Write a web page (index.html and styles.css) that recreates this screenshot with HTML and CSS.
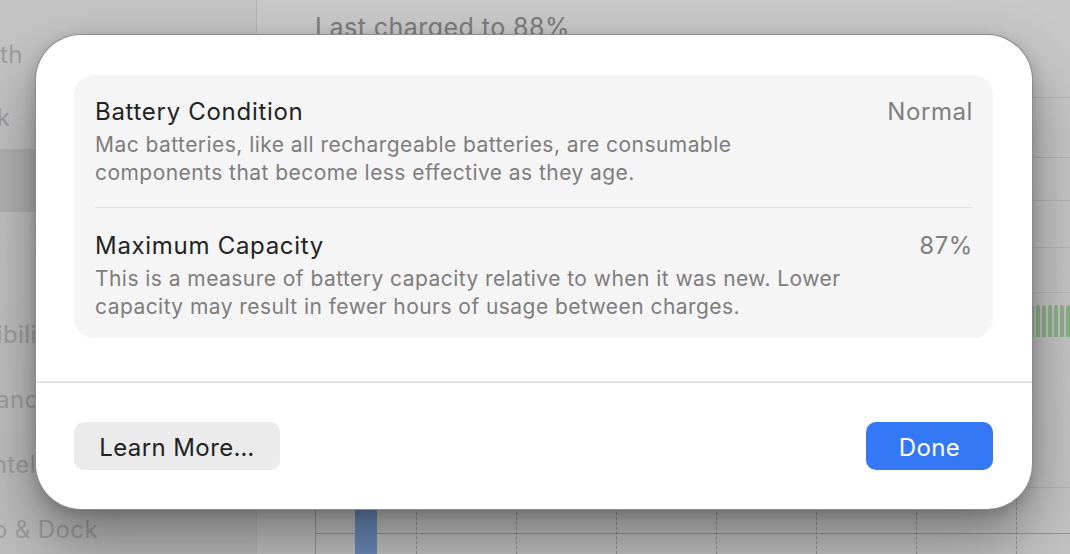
FILE: index.html
```html
<!DOCTYPE html>
<html lang="en">
<head>
<meta charset="utf-8">
<title>Battery Health</title>
<link rel="stylesheet" href="styles.css">
</head>
<body>
<div class="app">
  <aside class="sidebar">
    <div class="side-item"><span>Bluetooth</span></div>
    <div class="side-item"><span>Network</span></div>
    <div class="side-item selected"><span>Battery</span></div>
    <div class="side-gap"></div>
    <div class="side-item wide"><span>Accessibility</span></div>
    <div class="side-item wide"><span>Appearance</span></div>
    <div class="side-item wide"><span>Apple Intelligence &amp; Siri</span></div>
    <div class="side-item wide"><span>Desktop &amp; Dock</span></div>
  </aside>
  <main class="content">
    <div class="heading">Last charged to 88%</div>
    <div class="chart-top">
      <div class="grid-row h60"></div>
      <div class="grid-row h43"></div>
      <div class="grid-row h47"></div>
      <div class="grid-row h45"></div>
      <div class="grid-row h13"></div>
    </div>
    <div class="battery-bars">
      <i></i><i></i><i></i><i></i><i></i><i></i><i></i><i></i><i></i><i></i><i></i><i></i><i></i><i></i><i></i><i></i>
    </div>
    <div class="chart-bottom">
      <div class="col first"><div class="usage-bar"></div></div>
      <div class="col"></div>
      <div class="col"></div>
      <div class="col"></div>
      <div class="col"></div>
      <div class="col"></div>
      <div class="col"></div>
      <div class="col"></div>
    </div>
  </main>
</div>

<div class="sheet">
  <div class="sheet-body">
    <div class="card">
      <div class="info-row">
        <div class="info-text">
          <div class="info-title">Battery Condition</div>
          <div class="info-desc">Mac batteries, like all rechargeable batteries, are consumable components that become less effective as they age.</div>
        </div>
        <div class="info-value">Normal</div>
      </div>
      <div class="info-row">
        <div class="info-text">
          <div class="info-title">Maximum Capacity</div>
          <div class="info-desc">This is a measure of battery capacity relative to when it was new. Lower capacity may result in fewer hours of usage between charges.</div>
        </div>
        <div class="info-value">87%</div>
      </div>
    </div>
  </div>
  <div class="sheet-footer">
    <button class="btn btn-secondary">Learn More…</button>
    <button class="btn btn-primary">Done</button>
  </div>
</div>
</body>
</html>
```
FILE: styles.css
```css
* { box-sizing: border-box; }

html, body {
  margin: 0;
  padding: 0;
}

body {
  width: 1070px;
  height: 554px;
  overflow: hidden;
  position: relative;
  background: #c6c6c6;
  font-family: "Inter", "Noto Sans", "DejaVu Sans", sans-serif;
}

/* ---------- dimmed background window ---------- */
.app {
  display: flex;
  height: 554px;
}

.sidebar {
  width: 257px;
  flex: none;
  display: flex;
  flex-direction: column;
  padding-top: 23px;
  background: linear-gradient(180deg, #c4c4c4 0%, #bcbcbc 100%);
  border-right: 1px solid #b6b6b6;
  overflow: hidden;
}

.side-item {
  height: 63px;
  flex: none;
  display: flex;
  align-items: center;
  font-size: 24px;
  letter-spacing: 0.4px;
  color: #9d9d9d;
  white-space: nowrap;
}

.side-item span {
  margin-left: -89px;
}

.side-item.selected {
  background: #b2b2b2;
}

.side-item.wide {
  height: 65px;
}

.side-gap {
  height: 90px;
  flex: none;
}

.content {
  flex: 1;
  display: flex;
  flex-direction: column;
  padding-left: 58px;
  background: linear-gradient(180deg, #c8c8c8 0%, #c3c3c3 100%);
  overflow: hidden;
}

.heading {
  height: 97px;
  padding-top: 12px;
  font-size: 25px;
  line-height: 30px;
  letter-spacing: 0.45px;
  color: #7b7b7b;
  white-space: nowrap;
}

.chart-top {
  display: flex;
  flex-direction: column;
}

.grid-row {
  border-top: 1px solid #b5b5b5;
}
.h60 { height: 60px; }
.h43 { height: 43px; }
.h47 { height: 47px; }
.h45 { height: 45px; }
.h13 { height: 13px; }

.battery-bars {
  height: 32px;
  display: flex;
  justify-content: flex-end;
  gap: 2px;
}

.battery-bars i {
  width: 4px;
  background: #8cb388;
  border-radius: 2px 2px 0 0;
}

.chart-bottom {
  margin-top: 150px;
  flex: 1;
  display: flex;
  border-top: 1px solid #b3b3b3;
  border-left: 1px solid #959595;
  background: linear-gradient(#979797, #979797) 0 45px / 100% 1px no-repeat;
}

.col {
  width: 100px;
  flex: none;
  border-right: 1px dashed #949494;
  position: relative;
}

.col.first {
  width: 101px;
}

.usage-bar {
  position: absolute;
  left: 39px;
  top: 10px;
  bottom: 0;
  width: 22px;
  background: #6c8bbc;
}

/* ---------- sheet ---------- */
.sheet {
  position: absolute;
  left: 35px;
  top: 34px;
  width: 998px;
  height: 476px;
  display: flex;
  flex-direction: column;
  background: #ffffff;
  border: 1px solid rgba(0, 0, 0, 0.45);
  border-radius: 46px;
  box-shadow: 0 30px 60px rgba(0, 0, 0, 0.38), 0 4px 14px rgba(0, 0, 0, 0.16);
}

.sheet-body {
  padding: 40px 39px 43px 38px;
  border-bottom: 2px solid #e4e4e4;
}

.card {
  background: #f5f5f5;
  border-radius: 20px;
  padding: 0 20px 0 21px;
}

.info-row {
  display: flex;
  justify-content: space-between;
  align-items: flex-start;
  padding: 22px 0 20px;
}

.info-row + .info-row {
  border-top: 1px solid #e1e1e1;
  padding: 23px 0 17px;
}

.info-title {
  font-size: 24px;
  line-height: 30px;
  letter-spacing: 0.7px;
  color: #232323;
}

.info-desc {
  margin-top: 4px;
  max-width: 756px;
  font-size: 21px;
  line-height: 28px;
  letter-spacing: 0.45px;
  color: #7d7d7d;
}

.info-value {
  font-size: 24px;
  line-height: 30px;
  letter-spacing: 0.6px;
  color: #7f7f7f;
}

.sheet-footer {
  flex: 1;
  display: flex;
  justify-content: space-between;
  align-items: center;
  padding: 0 39px 0 38px;
}

.btn {
  height: 48px;
  border: none;
  border-radius: 10px;
  font-family: inherit;
  font-size: 24px;
  line-height: 45px;
  letter-spacing: 0.4px;
  padding: 3px 0 0;
  text-align: center;
  cursor: default;
}

.btn-secondary {
  background: #ebebeb;
  color: #222222;
  width: 206px;
}

.btn-primary {
  background: #3478f6;
  color: #ffffff;
  width: 127px;
}
```
